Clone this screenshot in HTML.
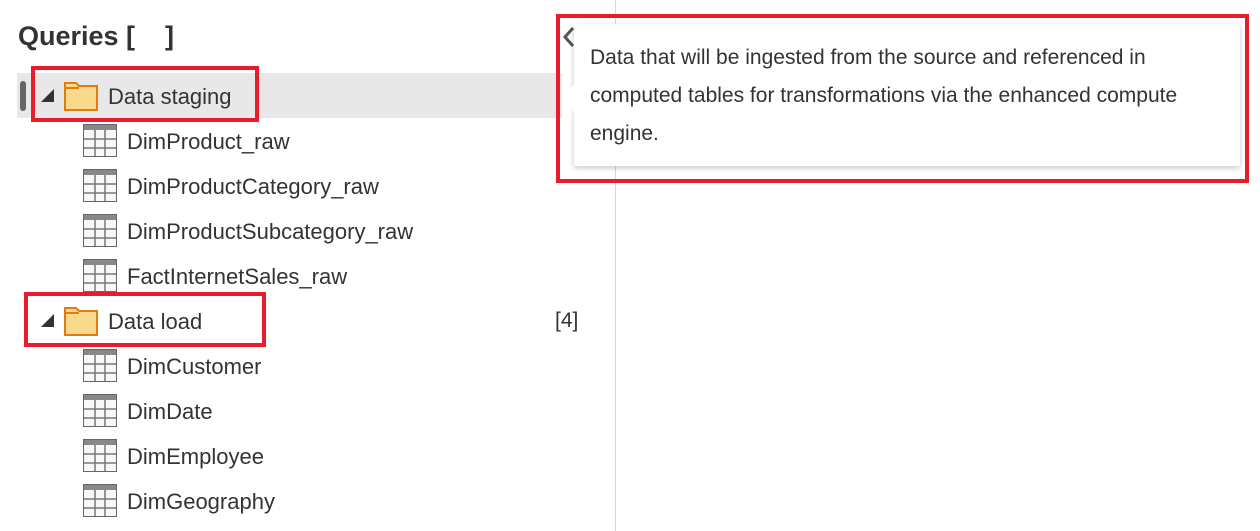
<!DOCTYPE html>
<html><head><style>
*{margin:0;padding:0;box-sizing:border-box}
body{width:1260px;height:531px;background:#fff;position:relative;overflow:hidden;font-family:"Liberation Sans","DejaVu Sans",sans-serif;color:#333}
.abs{position:absolute}
.title{left:18px;top:21px;font-size:27px;font-weight:bold;color:#333}
.row{position:absolute;left:0;height:45px;width:600px}
.lbl{position:absolute;font-size:22px;top:11px;white-space:nowrap;color:#333}
.red{position:absolute;border:4px solid #e81c2b}
</style></head><body>
<div class="abs title">Queries [&nbsp;&nbsp;&nbsp;&nbsp;]</div>
<div class="abs" style="left:615px;top:0;width:1px;height:531px;background:#d6d6d6"></div>
<div class="abs" style="left:17px;top:73px;width:545px;height:45px;background:#e8e8e8"></div>
<div class="abs" style="left:20px;top:81px;width:6px;height:30px;border-radius:3px;background:#666"></div>

<svg width="0" height="0" style="position:absolute"><defs>
<symbol id="tbl" viewBox="0 0 34 33"><rect x="0.5" y="0.5" width="33" height="32" fill="#f8f8f8" stroke="#666"/><rect x="1" y="1" width="32" height="5" fill="#888"/><path d="M1 15H33M1 24H33M12 6V32M22 6V32" stroke="#777" stroke-width="1.5"/></symbol>
<symbol id="fld" viewBox="0 0 34 30"><path d="M1 2H12L15 5H33V29H1Z" fill="#f9d98c" stroke="#e07c10" stroke-width="2"/><path d="M1 7H15" stroke="#e07c10" stroke-width="2"/></symbol>
</defs></svg>

<div class="row" style="top:73px">
<svg class="abs" style="left:41px;top:16px" width="14" height="14"><path d="M13 0V13H0Z" fill="#333"/></svg>
<svg class="abs" style="left:64px;top:8px" width="34" height="30"><use href="#fld"/></svg>
<div class="lbl" style="left:108px">Data staging</div></div>
<div class="row" style="top:298px">
<svg class="abs" style="left:41px;top:16px" width="14" height="14"><path d="M13 0V13H0Z" fill="#333"/></svg>
<svg class="abs" style="left:64px;top:8px" width="34" height="30"><use href="#fld"/></svg>
<div class="lbl" style="left:108px">Data load</div><div class="lbl" style="left:555px;font-size:21px">[4]</div></div>

<div class="row" style="top:118px"><svg class="abs" style="left:83px;top:6px" width="34" height="33"><use href="#tbl"/></svg><div class="lbl" style="left:127px">DimProduct_raw</div></div>
<div class="row" style="top:163px"><svg class="abs" style="left:83px;top:6px" width="34" height="33"><use href="#tbl"/></svg><div class="lbl" style="left:127px">DimProductCategory_raw</div></div>
<div class="row" style="top:208px"><svg class="abs" style="left:83px;top:6px" width="34" height="33"><use href="#tbl"/></svg><div class="lbl" style="left:127px">DimProductSubcategory_raw</div></div>
<div class="row" style="top:253px"><svg class="abs" style="left:83px;top:6px" width="34" height="33"><use href="#tbl"/></svg><div class="lbl" style="left:127px">FactInternetSales_raw</div></div>
<div class="row" style="top:343px"><svg class="abs" style="left:83px;top:6px" width="34" height="33"><use href="#tbl"/></svg><div class="lbl" style="left:127px">DimCustomer</div></div>
<div class="row" style="top:388px"><svg class="abs" style="left:83px;top:6px" width="34" height="33"><use href="#tbl"/></svg><div class="lbl" style="left:127px">DimDate</div></div>
<div class="row" style="top:433px"><svg class="abs" style="left:83px;top:6px" width="34" height="33"><use href="#tbl"/></svg><div class="lbl" style="left:127px">DimEmployee</div></div>
<div class="row" style="top:478px"><svg class="abs" style="left:83px;top:6px" width="34" height="33"><use href="#tbl"/></svg><div class="lbl" style="left:127px">DimGeography</div></div>

<svg class="abs" style="left:562px;top:26px" width="14" height="22"><path d="M11 2L3 11L11 20" fill="none" stroke="#555" stroke-width="3"/></svg>

<div class="abs" style="left:574px;top:24px;width:666px;height:142px;background:#fff;box-shadow:0 2px 6px rgba(0,0,0,.22);border-radius:2px"></div>
<svg class="abs" style="left:560px;top:84px" width="16" height="30"><path d="M15 0L1 15L15 30Z" fill="#fff"/></svg>
<div class="abs" style="left:590px;top:39px;width:645px;font-size:21px;line-height:38px;color:#333">Data that will be ingested from the source and referenced in<br>computed tables for transformations via the enhanced compute<br>engine.</div>

<div class="red" style="left:31px;top:66px;width:228px;height:56px"></div>
<div class="red" style="left:24px;top:292px;width:242px;height:55px"></div>
<div class="red" style="left:556px;top:14px;width:693px;height:169px"></div>
</body></html>
